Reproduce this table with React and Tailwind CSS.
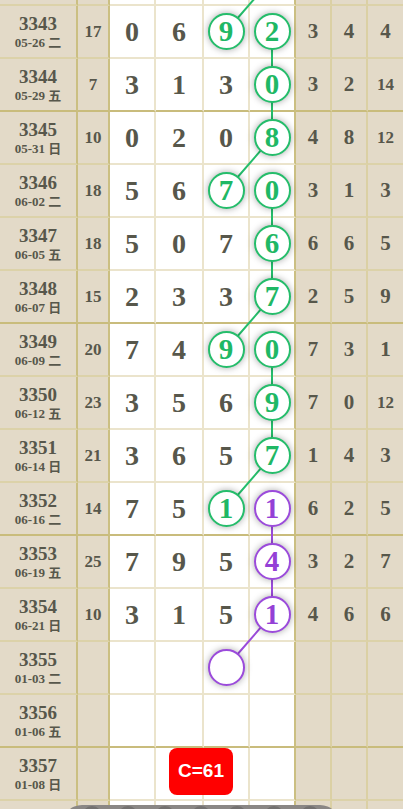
const rows = [
  { n: '', d: '', w: '', s: '', nums: ['', '', '', ''], r: ['', '', ''], m: {} },
  { n: '3343', d: '05-26', w: '二', s: '17', nums: ['0', '6', '9', '2'], r: ['3', '4', '4'], m: { 2: 'g', 3: 'g' } },
  { n: '3344', d: '05-29', w: '五', s: '7', nums: ['3', '1', '3', '0'], r: ['3', '2', '14'], m: { 3: 'g' } },
  { n: '3345', d: '05-31', w: '日', s: '10', nums: ['0', '2', '0', '8'], r: ['4', '8', '12'], m: { 3: 'g' } },
  { n: '3346', d: '06-02', w: '二', s: '18', nums: ['5', '6', '7', '0'], r: ['3', '1', '3'], m: { 2: 'g', 3: 'g' } },
  { n: '3347', d: '06-05', w: '五', s: '18', nums: ['5', '0', '7', '6'], r: ['6', '6', '5'], m: { 3: 'g' } },
  { n: '3348', d: '06-07', w: '日', s: '15', nums: ['2', '3', '3', '7'], r: ['2', '5', '9'], m: { 3: 'g' } },
  { n: '3349', d: '06-09', w: '二', s: '20', nums: ['7', '4', '9', '0'], r: ['7', '3', '1'], m: { 2: 'g', 3: 'g' } },
  { n: '3350', d: '06-12', w: '五', s: '23', nums: ['3', '5', '6', '9'], r: ['7', '0', '12'], m: { 3: 'g' } },
  { n: '3351', d: '06-14', w: '日', s: '21', nums: ['3', '6', '5', '7'], r: ['1', '4', '3'], m: { 3: 'g' } },
  { n: '3352', d: '06-16', w: '二', s: '14', nums: ['7', '5', '1', '1'], r: ['6', '2', '5'], m: { 2: 'g', 3: 'p' } },
  { n: '3353', d: '06-19', w: '五', s: '25', nums: ['7', '9', '5', '4'], r: ['3', '2', '7'], m: { 3: 'p' } },
  { n: '3354', d: '06-21', w: '日', s: '10', nums: ['3', '1', '5', '1'], r: ['4', '6', '6'], m: { 3: 'p' } },
  { n: '3355', d: '01-03', w: '二', s: '', nums: ['', '', '', ''], r: ['', '', ''], m: { 2: 'e' } },
  { n: '3356', d: '01-06', w: '五', s: '', nums: ['', '', '', ''], r: ['', '', ''], m: {} },
  { n: '3357', d: '01-08', w: '日', s: '', nums: ['', '', '', ''], r: ['', '', ''], m: {}, badge: 'C=61' },
  { n: '', d: '', w: '', s: '', nums: ['', '', '', ''], r: ['', '', ''], m: {} },
];

const serif = "font-['Liberation_Serif','Noto_Sans_CJK_SC',serif]";
const numWidths = ['w-[46px]', 'w-[48px]', 'w-[46px]', 'w-[46px]'];
const rWidths = ['w-[36px]', 'w-[36px]', 'w-[35px]'];

// page y of the centre of row i (i = 0 is 3343)
const yc = (i) => 6 + 53 * i + 25.5;
const CX = 226;
const DX = 272;

const green = [
  [[DX, yc(-1)], [CX, yc(0)]],
  [[DX, yc(0)], [DX, yc(1)], [DX, yc(2)], [CX, yc(3)]],
  [[DX, yc(3)], [DX, yc(4)], [DX, yc(5)], [CX, yc(6)]],
  [[DX, yc(6)], [DX, yc(7)], [DX, yc(8)], [CX, yc(9)]],
];
const purple = [[[DX, yc(9)], [DX, yc(10)], [DX, yc(11)], [CX, yc(12)]]];

function Ball({ kind, v }) {
  const color =
    kind === 'g'
      ? 'border-[#25bd6b] text-[#1fb865]'
      : 'border-[#9b4bdb] text-[#9440d6]';
  return (
    <div
      className={`relative z-10 w-[37px] h-[37px] rounded-full border-2 bg-white flex items-center justify-center shadow-[0_0_7px_rgba(0,0,0,0.35)] ${color}`}
    >
      <span className="text-[29px] font-bold leading-none">{kind === 'e' ? '' : v}</span>
    </div>
  );
}

function Row({ row, i }) {
  const thick = i % 4 === 2;
  const bb = thick ? 'border-[#c9bc7c]' : 'border-[#dcd2a9]';
  const bw = thick ? 'border-[#c9bc7c]' : 'border-[#ebe4cc]';
  return (
    <div className={`relative flex h-[53px] ${serif} text-[#57574b] font-bold`}>
      <div className={`w-[78px] bg-[#e3dac8] border-r-2 border-r-[#cbbf82] border-b-2 ${bb} flex flex-col items-center justify-center pt-[2px]`}>
        <div className="text-[19px] leading-[20px]">{row.n}</div>
        <div className="text-[13px] leading-[17px]">
          {row.d} {row.w}
        </div>
      </div>
      <div className={`w-[32px] bg-[#e3dac8] border-r-2 border-r-[#cbbf82] border-b-2 ${bb} flex items-center justify-center text-[17px]`}>
        {row.s}
      </div>
      {row.nums.map((v, k) => (
        <div
          key={k}
          className={`${numWidths[k]} bg-white border-b-2 ${bw} ${
            k === 3 ? 'border-r-2 border-r-[#cbbf82]' : 'border-r-2 border-r-[#ebe4cc]'
          } flex items-center justify-center text-[28px]`}
        >
          {row.m[k] ? <Ball kind={row.m[k]} v={v} /> : v}
        </div>
      ))}
      {row.r.map((v, k) => (
        <div
          key={k}
          className={`${rWidths[k]} bg-[#e3dac8] border-b-2 ${bb} ${
            k < 2 ? 'border-r-2 border-r-[#dbd0a4]' : ''
          } flex items-center justify-center ${v.length > 1 ? 'text-[17px]' : 'text-[21px]'}`}
        >
          {v}
        </div>
      ))}
      {row.badge && (
        <div className="absolute z-10 left-[169px] top-0 w-[64px] h-[47px] rounded-lg bg-[#ff0000] flex items-center justify-center text-white text-[19px] font-bold font-['Liberation_Sans',sans-serif]">
          {row.badge}
        </div>
      )}
    </div>
  );
}

function Lines() {
  const toPts = (seg) => seg.map((p) => p.join(',')).join(' ');
  return (
    <svg className="absolute inset-0 w-[403px] h-[809px]" viewBox="0 0 403 809">
      {green.map((seg, k) => (
        <polyline key={k} points={toPts(seg)} fill="none" stroke="#25bd6b" strokeWidth="2" />
      ))}
      {purple.map((seg, k) => (
        <polyline key={k} points={toPts(seg)} fill="none" stroke="#9b4bdb" strokeWidth="2" />
      ))}
    </svg>
  );
}

export default function App() {
  return (
    <div className="relative w-[403px] h-[809px] overflow-hidden bg-[#e3dac8]">
      <div className="mt-[-47px]">
        {rows.map((row, i) => (
          <Row key={i} row={row} i={i} />
        ))}
      </div>
      <Lines />
      {/* floating toolbar peeking in at the bottom */}
      <div className="absolute z-20 left-[62px] top-[805px] w-[278px] h-[40px] rounded-full bg-[#8a8785] flex items-start justify-around px-3 pt-[1px]">
        {[0, 1, 2, 3, 4, 5, 6].map((k) => (
          <div key={k} className="w-[20px] h-[20px] rounded-full bg-[#737170]" />
        ))}
      </div>
    </div>
  );
}
